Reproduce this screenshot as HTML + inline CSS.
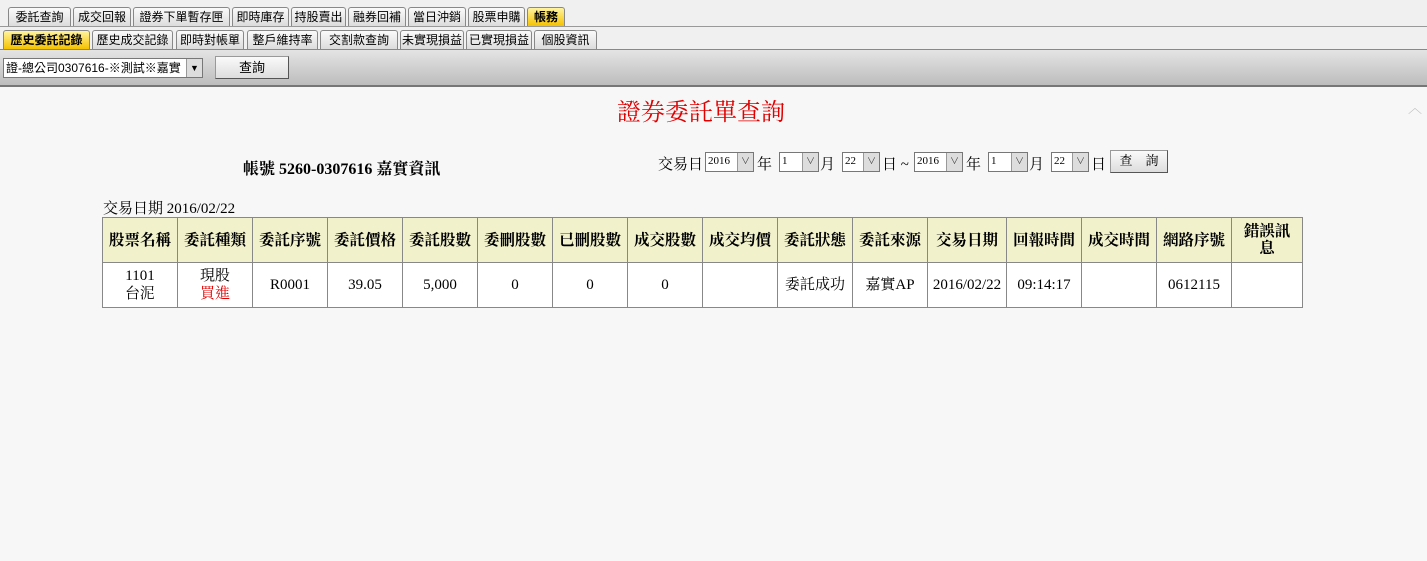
<!DOCTYPE html>
<html><head><meta charset="utf-8"><style>
*{box-sizing:border-box;margin:0;padding:0}
body{width:1427px;height:561px;overflow:hidden;background:#f7f7f7;font-family:"Liberation Serif","Noto Serif CJK TC","Noto Sans CJK TC",serif;position:relative;color:#000}
.s{font-family:"Liberation Sans","Noto Sans CJK TC",sans-serif}
#bar1{position:absolute;left:0;top:0;width:1427px;height:27px;background:#f0f0f0;border-bottom:1px solid #999}
#bar2{position:absolute;left:0;top:27px;width:1427px;height:23px;background:#f0f0f0;border-bottom:1px solid #888}
.t{position:absolute;height:19px;border:1px solid #888;border-bottom:none;background:linear-gradient(#fafafa,#dcdcdc);font-size:12px;line-height:18px;text-align:center;border-radius:3px 3px 0 0;white-space:nowrap;overflow:hidden}
.y{background:linear-gradient(#fff3a0,#f5c200);font-weight:bold}
#tool{position:absolute;left:0;top:50px;width:1427px;height:37px;background:linear-gradient(#e4e4e4,#bdbdbd);border-bottom:2px solid #777}
.sel{position:absolute;border:1px solid #777;background:#fff;font-size:12px;line-height:16px;padding-left:2px}
.arr{position:absolute;right:0;top:0;width:16px;height:100%;background:#ddd;border-left:1px solid #999;font-size:9px;text-align:center}
.btn{position:absolute;border:1px solid #999;border-right-color:#555;border-bottom-color:#555;background:linear-gradient(#fafafa,#ddd);font-size:13px;text-align:center}
table{position:absolute;left:102px;top:217px;border-collapse:collapse;font-size:15px;table-layout:fixed;width:1201px}
td,th{border:1px solid #888;text-align:center;padding:0;width:75px}
th{background:#f1f1cc;height:45px;font-weight:bold;font-size:15.5px;line-height:17px}
td{height:45px;line-height:18px;background:#fff}
</style></head><body>
<div id="bar1" class="s">
<div class="t" style="left:8px;top:7px;width:63px">委託查詢</div>
<div class="t" style="left:73px;top:7px;width:58px">成交回報</div>
<div class="t" style="left:133px;top:7px;width:97px">證券下單暫存匣</div>
<div class="t" style="left:232px;top:7px;width:57px">即時庫存</div>
<div class="t" style="left:291px;top:7px;width:55px">持股賣出</div>
<div class="t" style="left:348px;top:7px;width:58px">融券回補</div>
<div class="t" style="left:408px;top:7px;width:58px">當日沖銷</div>
<div class="t" style="left:468px;top:7px;width:57px">股票申購</div>
<div class="t y" style="left:527px;top:7px;width:38px">帳務</div>
</div>
<div id="bar2" class="s">
<div class="t y" style="left:3px;top:3px;width:87px">歷史委託記錄</div>
<div class="t" style="left:92px;top:3px;width:81px">歷史成交記錄</div>
<div class="t" style="left:176px;top:3px;width:68px">即時對帳單</div>
<div class="t" style="left:247px;top:3px;width:71px">整戶維持率</div>
<div class="t" style="left:320px;top:3px;width:78px">交割款查詢</div>
<div class="t" style="left:400px;top:3px;width:64px">未實現損益</div>
<div class="t" style="left:466px;top:3px;width:66px">已實現損益</div>
<div class="t" style="left:534px;top:3px;width:63px">個股資訊</div>
</div>
<div id="tool" class="s">
<div class="sel" style="left:3px;top:8px;width:200px;height:20px;line-height:18px">證-總公司0307616-※測試※嘉實<div class="arr">▼</div></div>
<div class="btn" style="left:215px;top:6px;width:74px;height:23px;line-height:21px">查詢</div>
</div>
<div style="position:absolute;left:1408px;top:98px;color:#bbb;font-size:14px">︿</div>
<div style="position:absolute;left:0;top:98px;width:1402px;text-align:center;color:#e00000;font-size:24px;line-height:30px">證券委託單查詢</div>
<div style="position:absolute;left:243px;top:156px;font-size:16px;font-weight:bold">帳號 5260-0307616 嘉實資訊</div>
<div style="position:absolute;left:658px;top:155px;font-size:15px;line-height:18px">
<span style="position:absolute;left:0;top:1px;white-space:nowrap">交易日</span>
<div class="sel" style="left:47px;top:-3px;width:49px;height:20px;font-size:11px">2016<div class="arr">∨</div></div>
<span style="position:absolute;left:99px;top:1px">年</span>
<div class="sel" style="left:121px;top:-3px;width:40px;height:20px;font-size:11px">1<div class="arr">∨</div></div>
<span style="position:absolute;left:162px;top:1px">月</span>
<div class="sel" style="left:184px;top:-3px;width:38px;height:20px;font-size:11px">22<div class="arr">∨</div></div>
<span style="position:absolute;left:224px;top:1px;white-space:nowrap">日 ~</span>
<div class="sel" style="left:256px;top:-3px;width:49px;height:20px;font-size:11px">2016<div class="arr">∨</div></div>
<span style="position:absolute;left:308px;top:1px">年</span>
<div class="sel" style="left:330px;top:-3px;width:40px;height:20px;font-size:11px">1<div class="arr">∨</div></div>
<span style="position:absolute;left:371px;top:1px">月</span>
<div class="sel" style="left:393px;top:-3px;width:38px;height:20px;font-size:11px">22<div class="arr">∨</div></div>
<span style="position:absolute;left:433px;top:1px">日</span>
<div class="btn" style="left:452px;top:-5px;width:58px;height:23px;line-height:20px;font-size:13px">查　詢</div>
</div>
<div style="position:absolute;left:103px;top:197px;font-size:15px">交易日期 2016/02/22</div>
<table>
<colgroup><col style="width:75px"><col style="width:75px"><col style="width:75px"><col style="width:75px"><col style="width:75px"><col style="width:75px"><col style="width:75px"><col style="width:75px"><col style="width:75px"><col style="width:75px"><col style="width:75px"><col style="width:79px"><col style="width:75px"><col style="width:75px"><col style="width:75px"><col style="width:71px"></colgroup>
<tr><th>股票名稱</th><th>委託種類</th><th>委託序號</th><th>委託價格</th><th>委託股數</th><th>委刪股數</th><th>已刪股數</th><th>成交股數</th><th>成交均價</th><th>委託狀態</th><th>委託來源</th><th>交易日期</th><th>回報時間</th><th>成交時間</th><th>網路序號</th><th>錯誤訊<br>息</th></tr>
<tr><td>1101<br>台泥</td><td>現股<br><span style="color:#e00000">買進</span></td><td>R0001</td><td>39.05</td><td>5,000</td><td>0</td><td>0</td><td>0</td><td></td><td>委託成功</td><td>嘉實AP</td><td>2016/02/22</td><td>09:14:17</td><td></td><td>0612115</td><td></td></tr>
</table>
</body></html>
